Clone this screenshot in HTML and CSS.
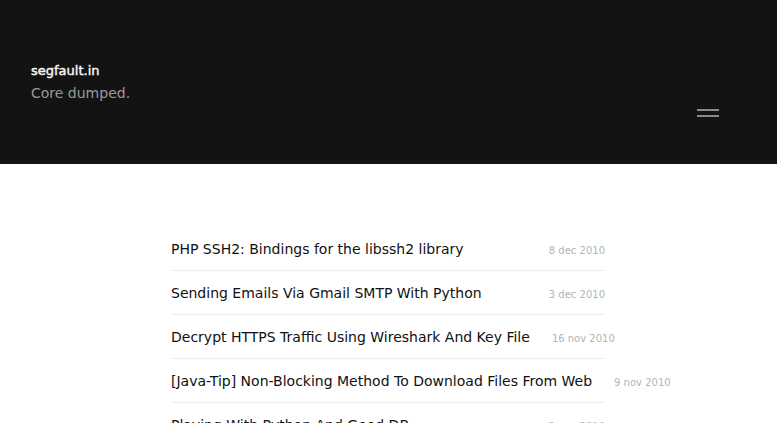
FILE: index.html
```html
<!DOCTYPE html>
<html>
<head>
<meta charset="utf-8">
<link rel="stylesheet" href="styles.css">
</head>
<body>
<header class="site-header">
  <div class="brand">
    <div class="site-title">segfault.in</div>
    <div class="site-tagline">Core dumped.</div>
  </div>
  <button class="menu-toggle" aria-label="Menu"><span></span><span></span></button>
</header>
<main class="content">
  <ul class="post-list">
    <li class="post"><a class="post-title">PHP SSH2: Bindings for the libssh2 library</a><span class="post-date">8 dec 2010</span></li>
    <li class="post"><a class="post-title">Sending Emails Via Gmail SMTP With Python</a><span class="post-date">3 dec 2010</span></li>
    <li class="post"><a class="post-title">Decrypt HTTPS Traffic Using Wireshark And Key File</a><span class="post-date">16 nov 2010</span></li>
    <li class="post"><a class="post-title">[Java-Tip] Non-Blocking Method To Download Files From Web</a><span class="post-date">9 nov 2010</span></li>
    <li class="post"><a class="post-title">Playing With Python And Good DB</a><span class="post-date">2 nov 2010</span></li>
  </ul>
</main>
</body>
</html>
```
FILE: styles.css
```css
html, body { margin: 0; padding: 0; }
body { background: #fff; font-family: "DejaVu Sans", sans-serif; overflow: hidden; height: 423px; }
.site-header {
  background: #131313;
  height: 164px;
  display: flex;
  align-items: flex-start;
  justify-content: space-between;
  padding: 0 58px 0 31px;
  box-sizing: border-box;
}
.brand { padding-top: 62px; }
.site-title { color: #f4f4f4; font-size: 13px; line-height: 18px; -webkit-text-stroke: 0.45px #f4f4f4; }
.site-tagline { color: #9a9a9a; font-size: 14px; line-height: 26px; }
.menu-toggle {
  margin-top: 109px;
  background: none; border: 0; padding: 0;
  display: flex; flex-direction: column; gap: 4px;
}
.menu-toggle span { display: block; width: 22px; height: 2px; background: #8a8a8a; }
.content { padding: 63px 0 0 171px; }
.post-list { list-style: none; margin: 0; padding: 0; width: 434px; }
.post {
  display: flex; align-items: center; gap: 22px;
  height: 44px; border-bottom: 1px solid #ececec; box-sizing: border-box;
  white-space: nowrap;
}
.post-title { color: #111; font-size: 14px; flex-shrink: 0; }
.post-date { color: #b4b4b4; font-size: 10px; margin-left: auto; flex-shrink: 0; padding-top: 3px; }
```
